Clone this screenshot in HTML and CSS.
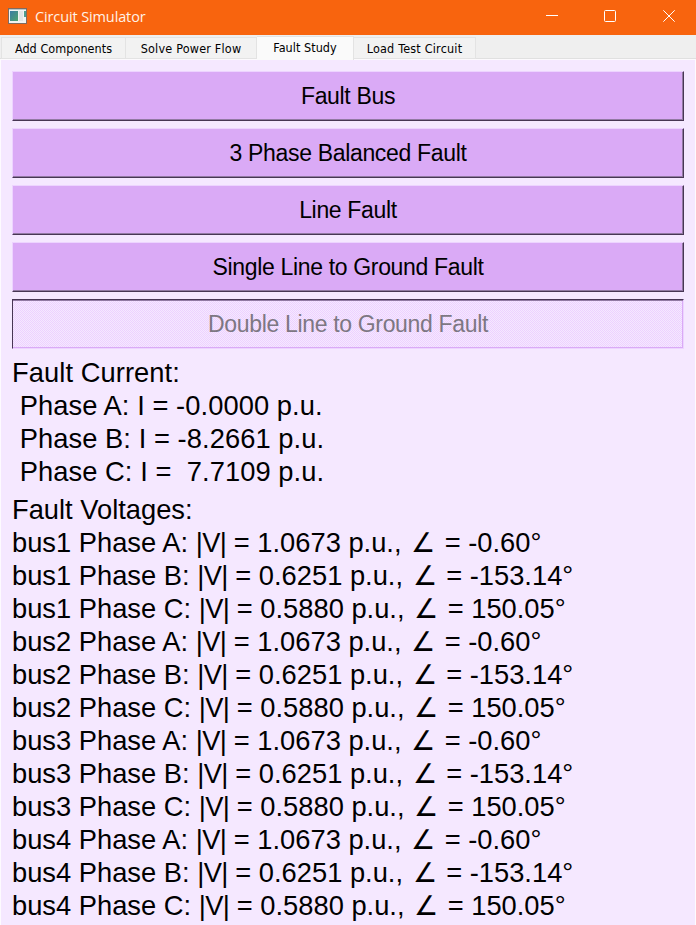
FILE: index.html
```html
<!DOCTYPE html>
<html lang="en">
<head>
<meta charset="utf-8">
<title>Circuit Simulator</title>
<link rel="stylesheet" href="styles.css">
</head>
<body>
<header class="titlebar">
  <svg class="app-icon" width="20" height="17" viewBox="0 0 20 17">
    <defs><linearGradient id="screen" x1="0" y1="0" x2="1" y2="1"><stop offset="0" stop-color="#3b7ba5"/><stop offset="1" stop-color="#4fa36d"/></linearGradient></defs>
    <rect x="0.5" y="0.5" width="18" height="15" fill="#f1f3f3" stroke="#806b60"/>
    <rect x="1" y="1" width="17" height="1" fill="#bac6cb"/>
    <rect x="2" y="3" width="8" height="10" fill="url(#screen)"/>
    <rect x="11" y="3" width="4" height="10" fill="#e2e4e4"/>
    <rect x="16" y="3" width="2" height="6" fill="#4f9c8b"/>
  </svg>
  <span class="title">Circuit Simulator</span>
  <div class="controls">
    <svg width="12" height="12" viewBox="0 0 12 12"><path d="M0 5.5H12"/></svg>
    <svg width="12" height="12" viewBox="0 0 12 12"><rect x=".5" y=".5" width="11" height="11" rx="1"/></svg>
    <svg class="close" width="12" height="12" viewBox="0 0 12 12"><path d="M.3.3 11.7 11.7M11.7.3.3 11.7"/></svg>
  </div>
</header>
<nav class="tabs">
  <div class="tab t1"><span>Add Components</span></div>
  <div class="tab t2"><span>Solve Power Flow</span></div>
  <div class="tab t3 active"><span>Fault Study</span></div>
  <div class="tab t4"><span>Load Test Circuit</span></div>
</nav>
<main class="panel">
  <div class="buttons">
    <button>Fault Bus</button>
    <button>3 Phase Balanced Fault</button>
    <button>Line Fault</button>
    <button>Single Line to Ground Fault</button>
    <button disabled>Double Line to Ground Fault</button>
  </div>
  <div class="result current">
    <p>Fault Current:</p>
    <p> Phase A: I = -0.0000 p.u.</p>
    <p> Phase B: I = -8.2661 p.u.</p>
    <p> Phase C: I =  7.7109 p.u.</p>
  </div>
  <div class="result voltages">
    <p>Fault Voltages:</p>
    <p><span>bus1 Phase A: </span><span class="v">|V|</span><span> = 1.0673 p.u., </span><span class="angle">∠</span><span> = -0.60°</span></p>
    <p><span>bus1 Phase B: </span><span class="v">|V|</span><span> = 0.6251 p.u., </span><span class="angle">∠</span><span> = -153.14°</span></p>
    <p><span>bus1 Phase C: </span><span class="v">|V|</span><span> = 0.5880 p.u., </span><span class="angle">∠</span><span> = 150.05°</span></p>
    <p><span>bus2 Phase A: </span><span class="v">|V|</span><span> = 1.0673 p.u., </span><span class="angle">∠</span><span> = -0.60°</span></p>
    <p><span>bus2 Phase B: </span><span class="v">|V|</span><span> = 0.6251 p.u., </span><span class="angle">∠</span><span> = -153.14°</span></p>
    <p><span>bus2 Phase C: </span><span class="v">|V|</span><span> = 0.5880 p.u., </span><span class="angle">∠</span><span> = 150.05°</span></p>
    <p><span>bus3 Phase A: </span><span class="v">|V|</span><span> = 1.0673 p.u., </span><span class="angle">∠</span><span> = -0.60°</span></p>
    <p><span>bus3 Phase B: </span><span class="v">|V|</span><span> = 0.6251 p.u., </span><span class="angle">∠</span><span> = -153.14°</span></p>
    <p><span>bus3 Phase C: </span><span class="v">|V|</span><span> = 0.5880 p.u., </span><span class="angle">∠</span><span> = 150.05°</span></p>
    <p><span>bus4 Phase A: </span><span class="v">|V|</span><span> = 1.0673 p.u., </span><span class="angle">∠</span><span> = -0.60°</span></p>
    <p><span>bus4 Phase B: </span><span class="v">|V|</span><span> = 0.6251 p.u., </span><span class="angle">∠</span><span> = -153.14°</span></p>
    <p><span>bus4 Phase C: </span><span class="v">|V|</span><span> = 0.5880 p.u., </span><span class="angle">∠</span><span> = 150.05°</span></p>
  </div>
</main>
</body>
</html>
```
FILE: styles.css
```css
* { box-sizing: border-box; }
body {
  margin: 0;
  height: 925px;
  overflow: hidden;
  display: flex;
  flex-direction: column;
  background: #fdfbfe;
  font-family: "Liberation Sans", Arial, sans-serif;
  color: #000;
}
.titlebar {
  flex: none;
  height: 35px;
  padding: 0 21px 3px 8px;
  display: flex;
  align-items: center;
  background: #f8640e;
}
.title {
  margin-left: 7px;
  font: 14.5px "Open Sans", sans-serif;
  letter-spacing: -0.12px;
  color: #fff2e8;
}
.controls { margin-left: auto; display: flex; gap: 46px; }
.controls svg { fill: none; stroke: #fff; stroke-width: 1; }
.controls .close { margin-left: 1px; }
.tabs {
  flex: none;
  height: 25px;
  padding: 2px 0 0 1px;
  display: flex;
  background: #efefef;
  border-bottom: 1px solid #fcfafd;
  box-shadow: inset 0 -1px #e0e0e0;
}
.tab {
  height: 22px;
  border: 1px solid #e3e3e3;
  border-left-width: 0;
  background: #f2f2f2;
  font: 12.5px/21px "DejaVu Sans Condensed", "DejaVu Sans", sans-serif;
  letter-spacing: 0.05px;
  text-align: center;
  white-space: nowrap;
}
.t1 { width: 125px; border-left-width: 1px; }
.t2 { width: 131px; letter-spacing: 0.2px; }
.t3 { width: 97px; }
.t4 { width: 122px; letter-spacing: 0.2px; }
.tab.active { margin-top: -1px; height: 24px; background: #fafafa; border-bottom: 0; line-height: 22px; }
.panel {
  flex: 1;
  min-height: 0;
  margin: 0 1px;
  padding: 11px 11px 0;
  background: #f5e8ff;
}
.buttons { display: flex; flex-direction: column; gap: 7px; }
button {
  height: 50px;
  padding: 0;
  border: 1px solid #483654;
  border-top-color: #edd4ff;
  border-left-color: #edd4ff;
  box-shadow: inset -1px -1px #927aa3;
  background: #daaaf6;
  font: 23px/48px "Liberation Sans", Arial, sans-serif;
  letter-spacing: -0.33px;
  color: #000;
}
button:disabled {
  color: #7d7783;
  border-color: #483654 #edd4ff #edd4ff #483654;
  box-shadow: inset 0 1px #927aa3, inset -1px -1px #daaaf6;
  background: repeating-conic-gradient(#edd1ff 0 25%, #f5e8ff 0 50%) 0 0 / 2px 2px;
}
.result {
  display: grid;
  margin-top: 5px;
  font-size: 27.3px;
  line-height: 33px;
}
.result p {
  display: flex;
  height: 33px;
  margin: 0;
  white-space: pre;
}
.current { margin-top: 7px; letter-spacing: 0.07px; }
.v { letter-spacing: -0.6px; }
.angle {
  width: 28px;
  padding-left: 2px;
  font-family: "DejaVu Sans", sans-serif;
  font-weight: 200;
}
```
